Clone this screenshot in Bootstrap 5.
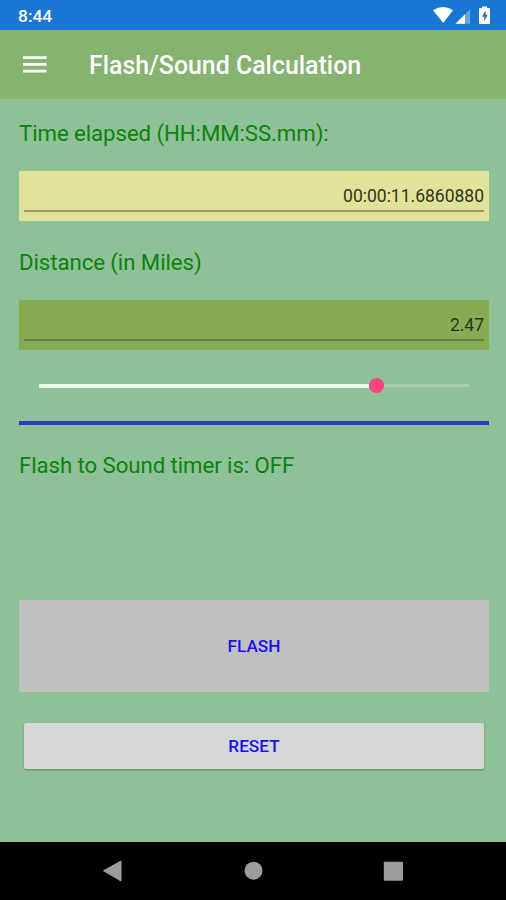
<!DOCTYPE html>
<html lang="en">
<head>
<meta charset="utf-8">
<meta name="viewport" content="width=device-width, initial-scale=1">
<title>Flash/Sound Calculation</title>
<link href="https://cdn.jsdelivr.net/npm/bootstrap@5.3.0/dist/css/bootstrap.min.css" rel="stylesheet">
<style>
  body { font-family: Roboto, "Liberation Sans", sans-serif; background: #8ec197; }
  .screen { height: 900px; overflow: hidden; }
  .statusbar { height: 30px; background: #1976d2; padding: 2px 15px 0 18px; }
  .clock { font-size: 17.4px; font-weight: 500; line-height: 28px; }
  .status-icons { margin-bottom: 2px; }
  .appbar { height: 69px; background: #87b371; padding: 1px 23px 0; --bs-navbar-padding-y: 0; }
  .app-title { font-size: 24.9px; font-weight: 500; line-height: 30px; margin-left: 42px; padding-top: 1px; }
  .content { padding: 20px 17px 0 19px; }
  .caption { font-size: 22.2px; line-height: 28px; color: #0b830e; letter-spacing: -.06px; }
  .field { height: 50px; padding: 0 5px 9px; margin-top: 24px; }
  .field .form-control { height: 41px; padding: 11px 0 0; font-size: 17.5px; line-height: 30px; border-bottom: 2px solid; }
  .field-time { background: #e1e39a; }
  .field-time .form-control { color: #32351c; border-color: #99996a; }
  .field-distance { background: #87ab52; }
  .field-distance .form-control { color: #26361a; border-color: #668340; }
  .caption-distance { margin-top: 27px; }
  .slider { height: 15px; margin: 28px 20px 0; }
  .track-on { width: 330px; height: 4px; background: #edf9e8; border-radius: 1px; }
  .thumb { width: 15px; height: 15px; background: #ff4081; }
  .track-off { height: 3px; background: #a7cea9; }
  .divider { height: 4px; background: #2b38c0; margin-top: 28px; }
  .caption-timer { margin-top: 26px; }
  .btn-flash, .btn-reset { font-size: 17.2px; font-weight: 500; color: #1d10ee; padding: 1px 0 0; border: 0; }
  .btn-flash { height: 92px; margin-top: 121px; background: #c0c0c0; border-radius: 2px; }
  .btn-reset { height: 46px; margin: 31px 5px 0; background: #d6d8d7; border-radius: 2px; box-shadow: 0 1px 2px rgba(0,0,0,.3); }
  .btn-flash:hover { background: #b8b8b8; }
  .btn-reset:hover { background: #cccecd; }
  .navkeys { height: 58px; background: #000; }
</style>
</head>
<body>
<div class="screen d-flex flex-column">
  <header>
    <div class="statusbar d-flex align-items-center justify-content-between text-white">
      <span class="clock">8:44</span>
      <svg class="status-icons" width="60" height="20" viewBox="0 0 60 20" fill="#fff" aria-hidden="true">
        <path d="M2 5.2Q12 -1 22 5.2L12.2 18Z"/>
        <path d="M24.5 18.8H39V4.3Z" opacity=".35"/>
        <path d="M24.5 18.8H34V9.3Z"/>
        <path d="M49 3h2V1.4h5V3h2q1 0 1 1v14q0 1-1 1h-9q-1 0-1-1V4q0-1 1-1z"/>
        <path d="M54.6 5.5v4.2h2l-3.4 6.6v-4.6H51z" fill="#1976d2"/>
      </svg>
    </div>
    <nav class="appbar navbar justify-content-start flex-nowrap">
      <button class="btn p-0 border-0 d-flex" type="button" aria-label="Menu">
        <svg width="24" height="18" viewBox="0 0 24 18" fill="#fff"><path d="M0 .3h23.5v2.8H0zM0 7h23.5v2.8H0zM0 13.7h23.5v2.8H0z"/></svg>
      </button>
      <h1 class="app-title text-white mb-0 text-nowrap">Flash/Sound Calculation</h1>
    </nav>
  </header>
  <main class="content d-flex flex-column flex-grow-1">
    <label class="caption" for="elapsed">Time elapsed (HH:MM:SS.mm):</label>
    <div class="field field-time">
      <input id="elapsed" class="form-control bg-transparent rounded-0 border-top-0 border-start-0 border-end-0 shadow-none text-end" value="00:00:11.6860880">
    </div>
    <label class="caption caption-distance" for="distance">Distance (in Miles)</label>
    <div class="field field-distance">
      <input id="distance" class="form-control bg-transparent rounded-0 border-top-0 border-start-0 border-end-0 shadow-none text-end" value="2.47">
    </div>
    <div class="slider d-flex align-items-center" role="slider" aria-label="Distance">
      <span class="track-on"></span><span class="thumb rounded-circle"></span><span class="track-off flex-grow-1"></span>
    </div>
    <div class="divider"></div>
    <div class="caption caption-timer">Flash to Sound timer is: OFF</div>
    <button class="btn btn-flash" type="button">FLASH</button>
    <button class="btn btn-reset" type="button">RESET</button>
  </main>
  <footer class="navkeys">
    <svg class="d-block" width="506" height="58" viewBox="0 0 506 58" fill="#9c9c9c" aria-hidden="true">
      <path d="M103.5 28.8L121 19v20z" stroke="#9c9c9c" stroke-linejoin="round"/>
      <circle cx="253.5" cy="28.7" r="9"/>
      <rect x="383.8" y="19.7" width="19.2" height="19" rx="1"/>
    </svg>
  </footer>
</div>
<script src="https://cdn.jsdelivr.net/npm/bootstrap@5.3.0/dist/js/bootstrap.bundle.min.js"></script>
</body>
</html>
